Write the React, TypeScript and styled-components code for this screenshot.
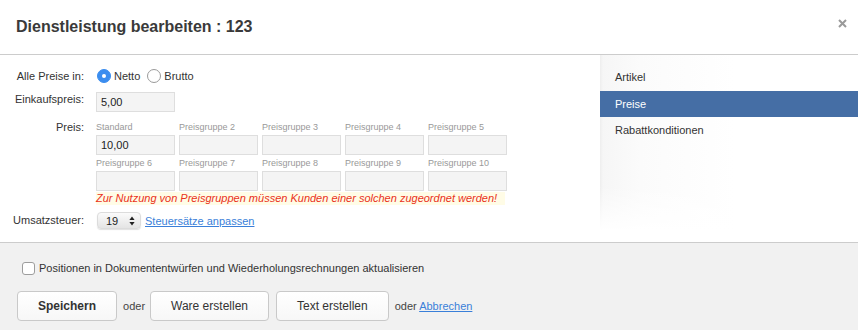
import styled, { createGlobalStyle } from "styled-components";

const GlobalStyles = createGlobalStyle`
  html, body {
    margin: 0;
    padding: 0;
    background: #ffffff;
  }
  body {
    font-family: "Liberation Sans", Arial, Helvetica, sans-serif;
    font-size: 11px;
    color: #333333;
  }
`;

const Dialog = styled.div`
  width: 858px;
  height: 330px;
  display: flex;
  flex-direction: column;
  overflow: hidden;
`;

const Header = styled.header`
  height: 54px;
  flex: none;
  display: flex;
  align-items: center;
  justify-content: space-between;
  padding: 0 11px 0 16px;
  border-bottom: 1px solid #cccccc;
`;

const Title = styled.h1`
  margin: 0;
  font-size: 16px;
  font-weight: bold;
  color: #3a3a3a;
`;

const CloseButton = styled.button`
  align-self: flex-start;
  margin-top: 18px;
  width: 10px;
  height: 10px;
  padding: 0;
  border: 0;
  background: none;
  display: flex;
  align-items: center;
  justify-content: center;
  cursor: pointer;
`;

const Body = styled.div`
  height: 187px;
  flex: none;
  display: flex;
`;

const Form = styled.div`
  width: 600px;
  flex: none;
  padding-top: 11px;
  display: flex;
  flex-direction: column;
`;

const Row = styled.div<{ $top?: number }>`
  display: flex;
  align-items: flex-start;
  gap: 12px;
  margin-top: ${(p) => p.$top ?? 0}px;
`;

const Label = styled.div<{ $lh: number }>`
  width: 84px;
  flex: none;
  text-align: right;
  line-height: ${(p) => p.$lh}px;
  color: #333333;
`;

const Field = styled.div`
  display: flex;
  flex-direction: column;
  align-items: flex-start;
`;

const RadioGroup = styled.div`
  height: 20px;
  display: flex;
  align-items: center;
  padding-left: 1px;
`;

const Radio = styled.span<{ $checked?: boolean }>`
  width: 14px;
  height: 14px;
  box-sizing: border-box;
  border-radius: 50%;
  border: 1px solid ${(p) => (p.$checked ? "#3b8def" : "#9a9a9a")};
  background: ${(p) => (p.$checked ? "#3b8def" : "#ffffff")};
  display: flex;
  align-items: center;
  justify-content: center;
  &::after {
    content: "";
    width: 4px;
    height: 4px;
    border-radius: 50%;
    background: #ffffff;
    display: ${(p) => (p.$checked ? "block" : "none")};
  }
`;

const RadioText = styled.span`
  margin: 0 7px 0 3px;
  font-size: 11px;
  color: #333333;
`;

const TextInput = styled.div`
  width: 79px;
  height: 20px;
  box-sizing: border-box;
  border: 1px solid #dedede;
  background: #f4f4f4;
  padding-left: 4px;
  font-size: 11px;
  line-height: 18px;
  color: #222222;
`;

const PriceGrid = styled.div`
  display: grid;
  grid-template-columns: repeat(5, 79px);
  column-gap: 4px;
  row-gap: 1px;
`;

const PriceCell = styled.div`
  display: flex;
  flex-direction: column;
`;

const SmallLabel = styled.div`
  height: 15px;
  line-height: 15px;
  font-size: 9px;
  color: #999999;
`;

const ErrorText = styled.div`
  margin-top: 1px;
  line-height: 13px;
  padding-right: 8px;
  background: #fffce6;
  color: #ea3120;
  font-style: italic;
  font-size: 11px;
`;

const TaxRow = styled.div`
  display: flex;
  align-items: center;
  gap: 4px;
  padding-left: 1px;
`;

const Select = styled.div`
  width: 44px;
  height: 17px;
  box-sizing: border-box;
  border-radius: 4px;
  border: 1px solid #dcdcdc;
  background: linear-gradient(#fbfbfb, #e4e4e4);
  box-shadow: 0 1px 1px rgba(0, 0, 0, 0.12);
  display: flex;
  align-items: center;
  justify-content: space-between;
  padding: 0 5px 0 8px;
  font-size: 11px;
  color: #222222;
`;

const Link = styled.a`
  color: #3a7fd9;
  text-decoration: underline;
  font-size: 11px;
  cursor: pointer;
`;

const Sidebar = styled.nav`
  flex: 1;
  padding-top: 9px;
  background:
    linear-gradient(to bottom, rgba(255, 255, 255, 0) 70%, #ffffff 94%),
    linear-gradient(to right, #eeeeee 0, #f6f6f6 3px, #fbfbfb 40px, #ffffff 135px);
`;

const NavItem = styled.div<{ $active?: boolean }>`
  height: 26px;
  line-height: 26px;
  padding-left: 15px;
  font-size: 11px;
  color: ${(p) => (p.$active ? "#ffffff" : "#333333")};
  background: ${(p) => (p.$active ? "#456ea5" : "transparent")};
  &:first-child {
    margin-bottom: 1px;
  }
`;

const Footer = styled.footer`
  flex: 1;
  background: #f1f1f1;
  border-top: 1px solid #cccccc;
  padding: 18px 17px 0;
`;

const CheckRow = styled.label`
  height: 14px;
  display: flex;
  align-items: center;
  gap: 4px;
  padding-left: 5px;
  font-size: 11px;
  color: #333333;
`;

const Checkbox = styled.span`
  width: 13px;
  height: 13px;
  box-sizing: border-box;
  border: 1px solid #9d9d9d;
  border-radius: 3px;
  background: #ffffff;
`;

const Actions = styled.div`
  margin-top: 16px;
  display: flex;
  align-items: center;
  gap: 5px;
`;

const Button = styled.button<{ $primary?: boolean; $gap?: number }>`
  height: 30px;
  box-sizing: border-box;
  padding: 0 20px;
  margin-left: ${(p) => p.$gap ?? 0}px;
  border: 1px solid #c9c9c9;
  border-radius: 4px;
  background: linear-gradient(#ffffff, #f7f7f7);
  font-family: inherit;
  font-size: 12px;
  font-weight: ${(p) => (p.$primary ? "bold" : "normal")};
  color: #333333;
  cursor: pointer;
`;

const Or = styled.span`
  margin-left: 1px;
  font-size: 11px;
  color: #444444;
`;

const Arrows = () => (
  <svg width="6" height="10" viewBox="0 0 6 10">
    <path d="M3 0.5 L5.6 4 H0.4 Z" fill="#222" />
    <path d="M3 9.5 L5.6 6 H0.4 Z" fill="#222" />
  </svg>
);

const groups = [
  { name: "Standard", value: "10,00" },
  { name: "Preisgruppe 2" },
  { name: "Preisgruppe 3" },
  { name: "Preisgruppe 4" },
  { name: "Preisgruppe 5" },
  { name: "Preisgruppe 6" },
  { name: "Preisgruppe 7" },
  { name: "Preisgruppe 8" },
  { name: "Preisgruppe 9" },
  { name: "Preisgruppe 10" },
];

const App = () => {
  return (
    <>
      <GlobalStyles />
      <Dialog>
        <Header>
          <Title>Dienstleistung bearbeiten : 123</Title>
          <CloseButton aria-label="Schließen">
            <svg width="9" height="9" viewBox="0 0 9 9">
              <path d="M1 1 L8 8 M8 1 L1 8" stroke="#9a9a9a" strokeWidth="2" />
            </svg>
          </CloseButton>
        </Header>
        <Body>
          <Form>
            <Row>
              <Label $lh={20}>Alle Preise in:</Label>
              <RadioGroup>
                <Radio $checked />
                <RadioText>Netto</RadioText>
                <Radio />
                <RadioText>Brutto</RadioText>
              </RadioGroup>
            </Row>
            <Row $top={6}>
              <Label $lh={15}>Einkaufspreis:</Label>
              <TextInput>5,00</TextInput>
            </Row>
            <Row $top={8}>
              <Label $lh={15}>Preis:</Label>
              <Field>
                <PriceGrid>
                  {groups.map((g) => (
                    <PriceCell key={g.name}>
                      <SmallLabel>{g.name}</SmallLabel>
                      <TextInput>{g.value ?? ""}</TextInput>
                    </PriceCell>
                  ))}
                </PriceGrid>
                <ErrorText>
                  Zur Nutzung von Preisgruppen müssen Kunden einer solchen zugeordnet werden!
                </ErrorText>
              </Field>
            </Row>
            <Row $top={7}>
              <Label $lh={17}>Umsatzsteuer:</Label>
              <TaxRow>
                <Select>
                  19
                  <Arrows />
                </Select>
                <Link>Steuersätze anpassen</Link>
              </TaxRow>
            </Row>
          </Form>
          <Sidebar>
            <NavItem>Artikel</NavItem>
            <NavItem $active>Preise</NavItem>
            <NavItem>Rabattkonditionen</NavItem>
          </Sidebar>
        </Body>
        <Footer>
          <CheckRow>
            <Checkbox />
            Positionen in Dokumententwürfen und Wiederholungsrechnungen aktualisieren
          </CheckRow>
          <Actions>
            <Button $primary>Speichern</Button>
            <Or>oder</Or>
            <Button>Ware erstellen</Button>
            <Button $gap={2}>Text erstellen</Button>
            <Or>
              oder <Link>Abbrechen</Link>
            </Or>
          </Actions>
        </Footer>
      </Dialog>
    </>
  );
};

export default App;
